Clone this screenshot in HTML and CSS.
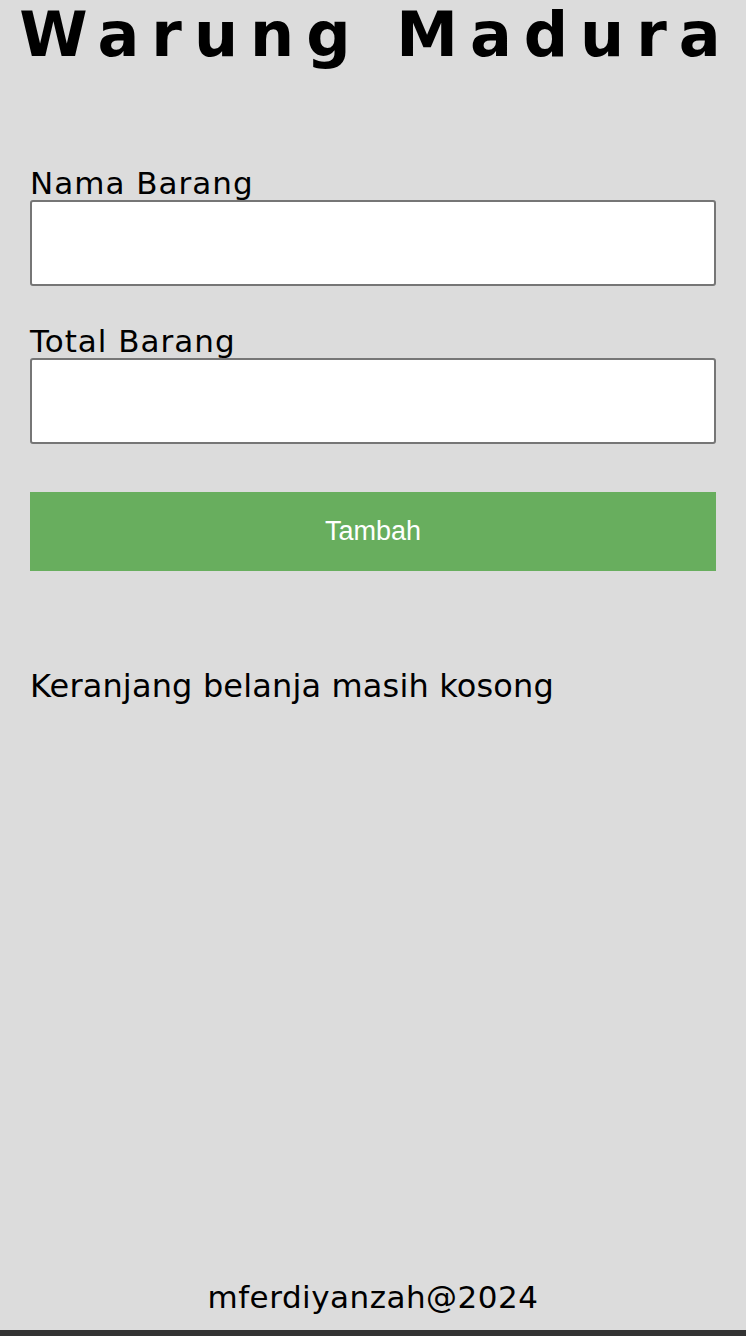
FILE: index.html
```html
<!DOCTYPE html>
<html lang="id">
<head>
<meta charset="utf-8">
<title>Warung Madura</title>
<link rel="stylesheet" href="styles.css">
</head>
<body>
<main class="page">
  <h1 class="title">Warung Madura</h1>
  <form class="form">
    <label class="label" for="nama">Nama Barang</label>
    <input class="input" id="nama" type="text">
    <label class="label label-second" for="total">Total Barang</label>
    <input class="input" id="total" type="number">
    <button class="btn" type="button">Tambah</button>
  </form>
  <p class="empty">Keranjang belanja masih kosong</p>
</main>
<footer class="footer">mferdiyanzah@2024</footer>
</body>
</html>
```

FILE: styles.css
```css
* { box-sizing: border-box; }
html, body { margin: 0; padding: 0; }
body {
  background: #dcdcdc;
  font-family: "DejaVu Sans", "Noto Sans", sans-serif;
  color: #000;
  min-height: 100vh;
  display: flex;
  flex-direction: column;
}
.page {
  flex: 1;
  padding: 0 30px;
}
.title {
  margin: 0 -30px;
  text-align: center;
  white-space: nowrap;
  font-size: 62px;
  line-height: 70px;
  font-weight: 700;
  letter-spacing: 12px;
  text-indent: 6px;
}
.form {
  display: flex;
  flex-direction: column;
  margin-top: 96px;
}
.label {
  font-size: 31px;
  line-height: 34px;
  letter-spacing: 1px;
  display: block;
}
.label-second { margin-top: 38px; }
.input {
  height: 86px;
  width: 100%;
  border: 2px solid #767676;
  border-radius: 3px;
  background: #fff;
  font-size: 24px;
}
.btn {
  margin-top: 48px;
  height: 79px;
  width: 100%;
  border: none;
  background: #68ae5e;
  color: #fff;
  font-family: "Liberation Sans", Arial, sans-serif;
  font-size: 27px;
}
.empty {
  margin: 96px 0 0;
  font-size: 32px;
  line-height: 38px;
  letter-spacing: 0.15px;
}
.footer {
  text-align: center;
  font-size: 31px;
  line-height: 36px;
  letter-spacing: 0.5px;
  padding-bottom: 15px;
  border-bottom: 6px solid #333;
}
```
